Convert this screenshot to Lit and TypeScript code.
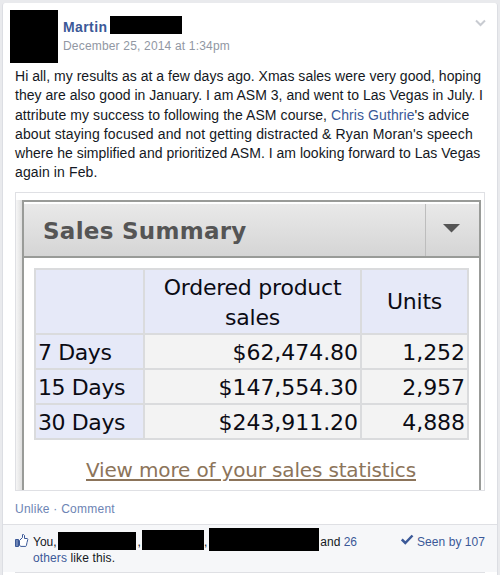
import { LitElement, html, css } from "lit";
import { customElement } from "lit/decorators.js";

@customElement("sales-panel")
class SalesPanel extends LitElement {
  static styles = css`
    :host { display: block; box-sizing: border-box; height: 299px; border: 1px solid #dfe0e4; padding: 7px 3px 0 0; overflow: hidden; background: #fff;
      font-family: "DejaVu Sans", Verdana, sans-serif; color: #0b0b14; }
    .row { display: flex; height: 290px; }
    .shade { width: 6px; background: linear-gradient(90deg, #f6f6f6, #dfdfdf); }
    .panel { flex: 1; box-sizing: border-box; border: 2px solid #999b98; border-bottom: 0; background: #fff; }
    .head { display: flex; box-sizing: border-box; height: 56px; border-top: 2px solid #fff; border-bottom: 2px solid #999b98; background: linear-gradient(#e9e9e9, #d5d5d5); }
    .title { flex: 1; padding-left: 19px; font: bold 23px/54px "DejaVu Sans", sans-serif; letter-spacing: 0.28px; color: #555; white-space: nowrap; }
    .menu { width: 54px; box-sizing: border-box; border-left: 1px solid #bdbdbd; display: flex; justify-content: center; padding: 20px 2px 0 0; }
    .grid { display: grid; grid-template-columns: 107px 215px 105px; grid-template-rows: 63px 33px 33px 33px; gap: 2px; padding: 2px; background: #dadbdd; margin: 10px 0 0 10px; width: 431px; }
    .c { font-size: 22px; line-height: 35px; background: #f3f3f3; text-align: right; white-space: nowrap; letter-spacing: -0.05px; padding-right: 2px; }
    .h { background: #e6e9f8; text-align: center; line-height: 30px; padding: 3px 0 0; height: 60px; letter-spacing: -0.23px; }
    .one { line-height: 57px; }
    .d { background: #e6e9f8; text-align: left; padding: 0 0 0 2px; letter-spacing: -0.4px; }
    .more { margin: 16px 0 0 62px; font-size: 20px; line-height: 28px; color: #8c745a; letter-spacing: -0.16px; text-decoration: underline; text-decoration-thickness: 2px; text-underline-offset: 2px; text-decoration-skip-ink: auto; white-space: nowrap; }
  `;
  render() {
    const rows = [["7 Days", "$62,474.80", "1,252"], ["15 Days", "$147,554.30", "2,957"], ["30 Days", "$243,911.20", "4,888"]];
    return html`<div class="row"><div class="shade"></div><div class="panel">
      <div class="head"><div class="title">Sales Summary</div>
        <div class="menu"><svg width="17" height="9"><path d="M0 0H17L8.5 8.5Z" fill="#555"/></svg></div></div>
      <div class="grid"><div class="c h"></div><div class="c h">Ordered product<br>sales</div><div class="c h one">Units</div>
        ${rows.map(r => html`<div class="c d">${r[0]}</div><div class="c">${r[1]}</div><div class="c">${r[2]}</div>`)}
      </div>
      <div class="more">View more of your sales statistics</div>
    </div></div>`;
  }
}

@customElement("app-root")
class AppRoot extends LitElement {
  static styles = css`
    :host { display: block; box-sizing: border-box; height: 575px; overflow: hidden; background: #e9eaed; padding: 3px 2px 0 2px;
      font-family: "Liberation Sans", Arial, sans-serif; }
    .card { height: 572px; box-sizing: border-box; background: #fff; border-left: 1px solid #dcdee3; border-right: 1px solid #dcdee3; border-radius: 3px 3px 0 0; }
    .top { display: flex; height: 60px; padding: 7px 11px 0 7px; box-sizing: border-box; }
    .avatar { width: 48px; height: 53px; background: #000; }
    .who { flex: 1; padding: 6px 0 0 5px; }
    .name { display: flex; height: 18px; font: bold 14px/22px "Liberation Sans", sans-serif; color: #3b5998; letter-spacing: 0.4px; }
    .mask { background: #000; flex: none; }
    .name .mask { width: 72px; height: 18px; margin-left: 3px; }
    .date { font-size: 12px; line-height: 16px; color: #9197a3; margin-top: 4px; letter-spacing: 0.18px; }
    .caret { margin-top: 9px; }
    .text { padding: 4px 0 0 12px; font-size: 14px; line-height: 19.3px; color: #141823; height: 125px; box-sizing: border-box; white-space: nowrap; }
    .t1 { letter-spacing: 0.02px; }
    .t2 { letter-spacing: 0.08px; }
    .t3 { letter-spacing: 0.12px; }
    a { color: #3b5998; }
    sales-panel { margin: 4px 12px 0; }
    .actions { height: 33px; line-height: 37px; padding: 0 12px; font-size: 12px; color: #6d84b4; letter-spacing: 0.24px; }
    .foot { background: #f6f7f9; border-top: 1px solid #dfe0e4; height: 47px; padding: 0 12px; font-size: 12px; line-height: 16px; color: #141823; }
    .likes { display: flex; }
    .thumb { margin: 9px 4px 0 0; flex: none; }
    .names { flex: 1; padding-top: 3px; white-space: nowrap; }
    .line { display: flex; height: 22px; }
    .line span, .line a { padding-top: 6px; }
    .m1 { width: 78px; height: 18px; margin: 4px 2px 0 1px; }
    .m2 { width: 62px; height: 20px; margin: 2px 0 0 1px; }
    .m3 { width: 110px; height: 23px; margin: 0 1px 0 2px; }
    .others { letter-spacing: 0.12px; }
    .seen { display: flex; color: #3b5998; padding-top: 9px; letter-spacing: 0.05px; white-space: nowrap; }
    .rule { border-top: 1px solid #dfe0e4; margin-top: 6px; }
  `;
  render() {
    return html`<div class="card">
      <div class="top"><div class="avatar"></div>
        <div class="who"><div class="name">Martin<div class="mask"></div></div><div class="date">December 25, 2014 at 1:34pm</div></div>
        <svg class="caret" width="11" height="9"><path d="M1 1.5L5.5 6L10 1.5" fill="none" stroke="#c8cbd1" stroke-width="2"/></svg></div>
      <div class="text"><div class="t1">Hi all, my results as at a few days ago. Xmas sales were very good, hoping</div><div class="t1">they are also good in January. I am ASM 3, and went to Las Vegas in July. I</div><div class="t2">attribute my success to following the ASM course, <a>Chris Guthrie</a>'s advice</div><div class="t3">about staying focused and not getting distracted &amp; Ryan Moran's speech</div><div class="t1">where he simplified and prioritized ASM. I am looking forward to Las Vegas</div><div class="t3">again in Feb.</div></div>
      <sales-panel></sales-panel>
      <div class="actions">Unlike · Comment</div>
      <div class="foot"><div class="likes">
        <svg class="thumb" width="14" height="13"><path d="M.5 5.5H3.5V12.5H.5Z" fill="#6d84b4" stroke="#3b5998"/><path d="M4.5 6.5L7.5 3.5V.6H8.6L9.5 1.5V4.5H12.3L12.8 5.5L12 8.5L11.4 11.5L10.8 12.4H6L4.5 11.5Z" fill="#fff" stroke="#3b5998"/></svg>
        <div class="names"><div class="line"><span>You,</span><div class="mask m1"></div><span>,</span><div class="mask m2"></div><span>,</span><div class="mask m3"></div><span>and&nbsp;</span><a>26</a></div>
          <div class="others"><a>others</a> like this.</div></div>
        <div class="seen"><svg width="16" height="12"><path d="M.8 5.5L4.3 9L11.5 1.5" fill="none" stroke="#3b5998" stroke-width="2.5"/></svg>Seen by 107</div>
      </div><div class="rule"></div></div>
    </div>`;
  }
}
